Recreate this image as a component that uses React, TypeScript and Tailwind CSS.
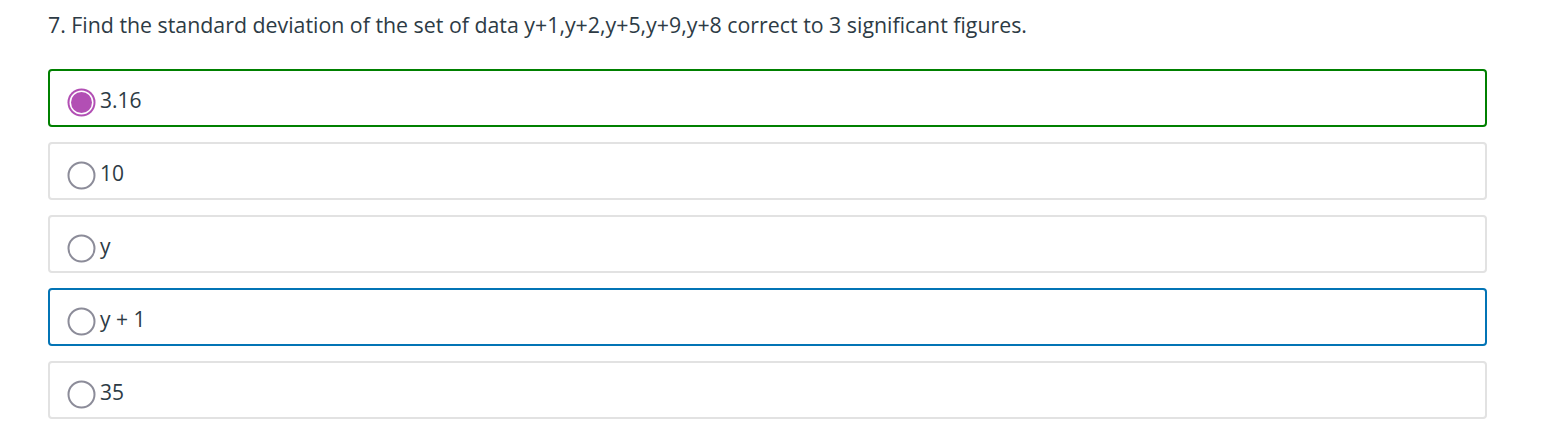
import React from "react";

type Option = {
  label: string;
  state: "correct" | "focus" | "none";
  checked?: boolean;
};

const options: Option[] = [
  { label: "3.16", state: "correct", checked: true },
  { label: "10", state: "none" },
  { label: "y", state: "none" },
  { label: "y + 1", state: "focus" },
  { label: "35", state: "none" },
];

const Radio = ({ checked }: { checked?: boolean }) => (
  <svg width="29" height="29" viewBox="0 0 29 29" className="shrink-0 mt-[8px]">
    {checked ? (
      <>
        <circle cx="14.5" cy="14.5" r="14" fill="#b24fb4" />
        <circle cx="14.5" cy="14.5" r="12" fill="#ffffff" />
        <circle cx="14.5" cy="14.5" r="10.5" fill="#b24fb4" />
      </>
    ) : (
      <circle cx="14.5" cy="14.5" r="13" fill="#ffffff" stroke="#8c8c99" strokeWidth="2" />
    )}
  </svg>
);

export default function App() {
  return (
    <div
      className="w-[1545px] h-[435px] bg-white text-[#2d3b45] overflow-hidden"
      style={{ fontFamily: '"Open Sans", "Liberation Sans", sans-serif' }}
    >
      <div className="ml-[48px] w-[1439px]">
        <h2 className="pt-[11px] text-[21.33px] leading-[28px] font-normal text-[#2d3b45]">
          7. Find the standard deviation of the set of data y+1,y+2,y+5,y+9,y+8 correct to 3 significant figures.
        </h2>

        <div className="mt-[30px] flex flex-col gap-[15px]">
          {options.map((o) => (
            <div
              key={o.label}
              className={
                o.state === "correct"
                  ? "h-[58px] border-2 border-[#008000] rounded-[4px] pl-[17px] flex items-center gap-[4px]"
                  : o.state === "focus"
                  ? "h-[58px] border-2 border-[#0374b5] rounded-[4px] pl-[17px] flex items-center gap-[4px]"
                  : "h-[58px] border-2 border-[#e2e2e2] rounded-[4px] pl-[17px] flex items-center gap-[4px]"
              }
            >
              <Radio checked={o.checked} />
              <span className="mt-[3px] text-[21px] leading-[28px]">{o.label}</span>
            </div>
          ))}
        </div>
      </div>
    </div>
  );
}
